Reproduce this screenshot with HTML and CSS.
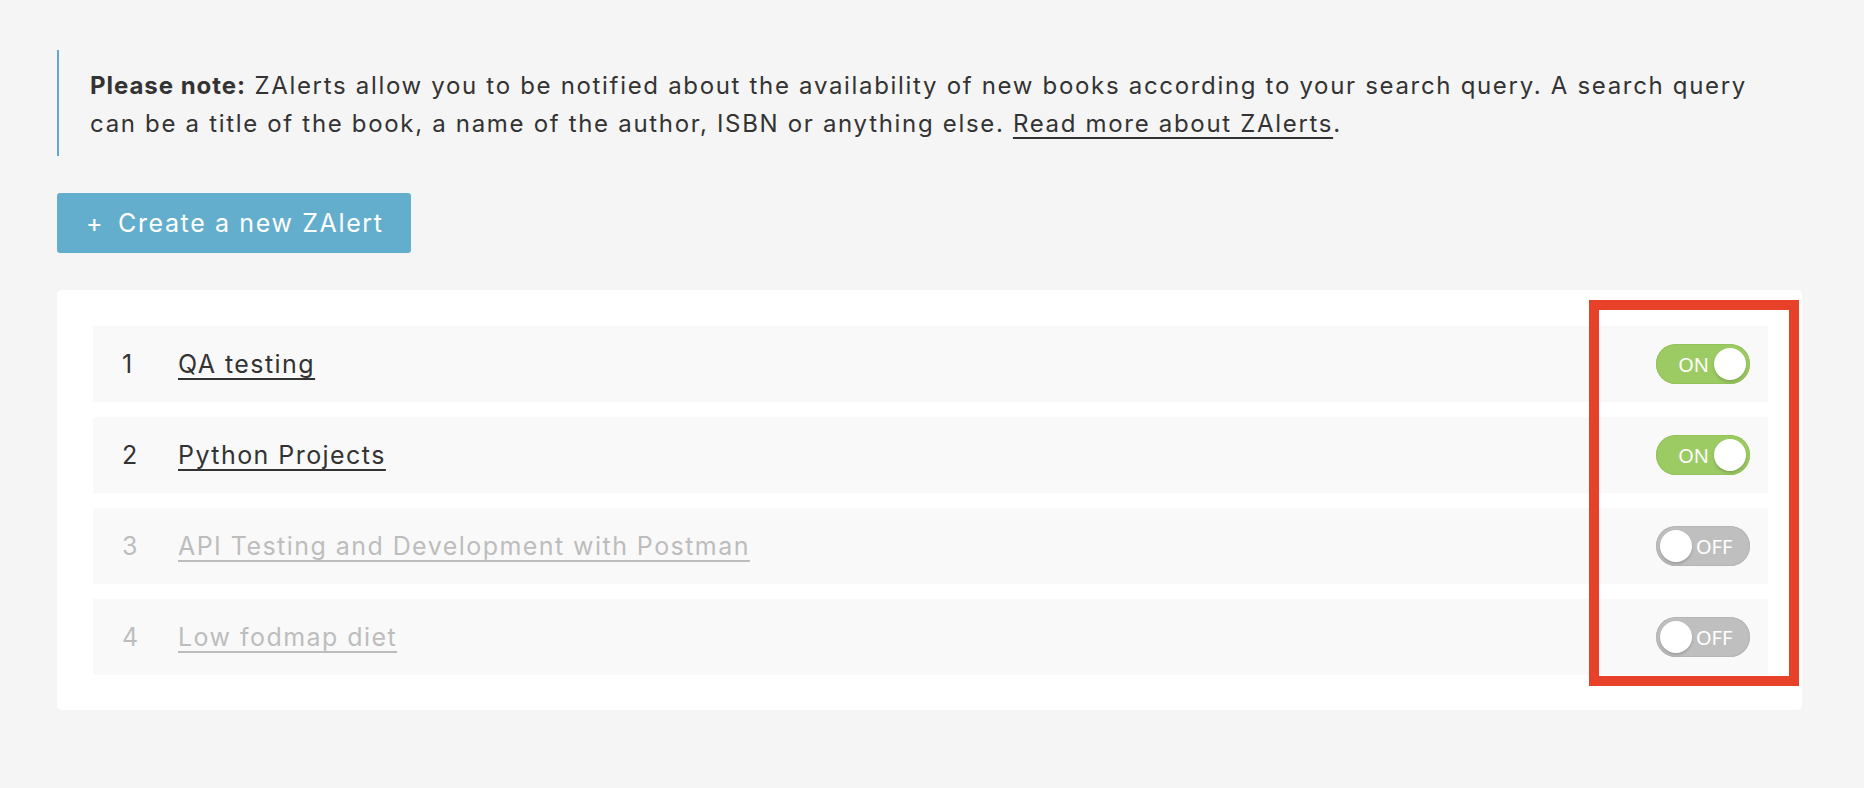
FILE: index.html
```html
<!DOCTYPE html>
<html lang="en">
<head>
<meta charset="utf-8">
<title>ZAlerts</title>
<link rel="stylesheet" href="styles.css">
</head>
<body>
<main class="page">
  <div class="note">
    <p><b>Please note:</b> ZAlerts allow you to be notified about the availability of new books according to your search query. A search query<br>can be a title of the book, a name of the author, ISBN or anything else. <a href="#">Read more about ZAlerts</a>.</p>
  </div>

  <button class="btn-create" type="button"><span class="plus">+</span>Create a new ZAlert</button>

  <section class="card">
    <ul class="alerts">
      <li class="alert-row">
        <span class="num">1</span>
        <a class="title" href="#">QA testing</a>
        <span class="toggle on"><span class="label">ON</span><span class="knob"></span></span>
      </li>
      <li class="alert-row">
        <span class="num">2</span>
        <a class="title" href="#">Python Projects</a>
        <span class="toggle on"><span class="label">ON</span><span class="knob"></span></span>
      </li>
      <li class="alert-row disabled">
        <span class="num">3</span>
        <a class="title" href="#">API Testing and Development with Postman</a>
        <span class="toggle off"><span class="knob"></span><span class="label">OFF</span></span>
      </li>
      <li class="alert-row disabled">
        <span class="num">4</span>
        <a class="title" href="#">Low fodmap diet</a>
        <span class="toggle off"><span class="knob"></span><span class="label">OFF</span></span>
      </li>
    </ul>
    <div class="highlight"></div>
  </section>
</main>
</body>
</html>
```

FILE: styles.css
```css
* { box-sizing: border-box; }

html, body {
  margin: 0;
  padding: 0;
  background: #f5f5f5;
}

body {
  font-family: Inter, "Noto Sans", "Liberation Sans", sans-serif;
  color: #333333;
}

.page {
  padding: 50px 62px 60px 57px;
}

.note {
  border-left: 2px solid #5fa9cf;
  padding: 17px 0 13px 31px;
}

.note p {
  margin: 0;
  font-size: 24px;
  line-height: 38px;
  letter-spacing: 0.07em;
  color: #333333;
  white-space: nowrap;
}

.note b {
  font-weight: 700;
  letter-spacing: 0.04em;
}

.note a {
  color: #333333;
  text-decoration: underline;
  text-decoration-thickness: 2px;
  text-underline-offset: 5px;
}

.btn-create {
  display: flex;
  align-items: center;
  margin-top: 37px;
  width: 354px;
  height: 60px;
  padding: 0 0 0 29px;
  border: none;
  border-radius: 3px;
  background: #64aecd;
  color: #ffffff;
  font-family: Inter, "Noto Sans", sans-serif;
  font-size: 25px;
  letter-spacing: 0.065em;
  text-align: left;
  cursor: pointer;
}

.btn-create .plus {
  width: 32px;
  font-size: 25px;
  font-weight: 400;
  letter-spacing: 0;
  text-align: left;
}

.card {
  position: relative;
  margin-top: 37px;
  background: #ffffff;
  border-radius: 5px;
  padding: 36px 34px 35px 36px;
}

.alerts {
  list-style: none;
  margin: 0;
  padding: 0;
  display: flex;
  flex-direction: column;
  gap: 15px;
}

.alert-row {
  display: flex;
  align-items: center;
  height: 76px;
  background: #f9f9f9;
  padding: 0 18px 0 29px;
  font-size: 25px;
  letter-spacing: 0.058em;
}

.num {
  width: 56px;
  color: #333333;
}

.title {
  margin-right: auto;
  color: #333333;
  text-decoration: underline;
  text-decoration-thickness: 2px;
  text-underline-offset: 5px;
}

.alert-row.disabled .num,
.alert-row.disabled .title {
  color: #bdbdbd;
}

.toggle {
  display: flex;
  align-items: center;
  width: 94px;
  height: 40px;
  border-radius: 20px;
  padding: 0 4px;
  font-family: "Noto Sans", Inter, sans-serif;
  font-size: 20px;
  font-weight: 400;
  letter-spacing: 0;
  color: #ffffff;
}

.toggle.on {
  background: #9dcb63;
  box-shadow: inset 0 0 0 1px #94c25b;
  justify-content: flex-end;
}

.toggle.off {
  background: #bfbfbf;
  box-shadow: inset 0 0 0 1px #b5b5b5;
}

.toggle .knob {
  width: 32px;
  height: 32px;
  border-radius: 50%;
  background: #ffffff;
  box-shadow: 0 2px 3px rgba(0, 0, 0, 0.18);
  flex: none;
}

.toggle.on .label {
  margin-right: 5px;
}

.toggle.off .label {
  margin-left: 4px;
}

.highlight {
  position: absolute;
  left: 1532px;
  top: 10px;
  width: 210px;
  height: 386px;
  border: 10px solid #e8412a;
  pointer-events: none;
}
```
